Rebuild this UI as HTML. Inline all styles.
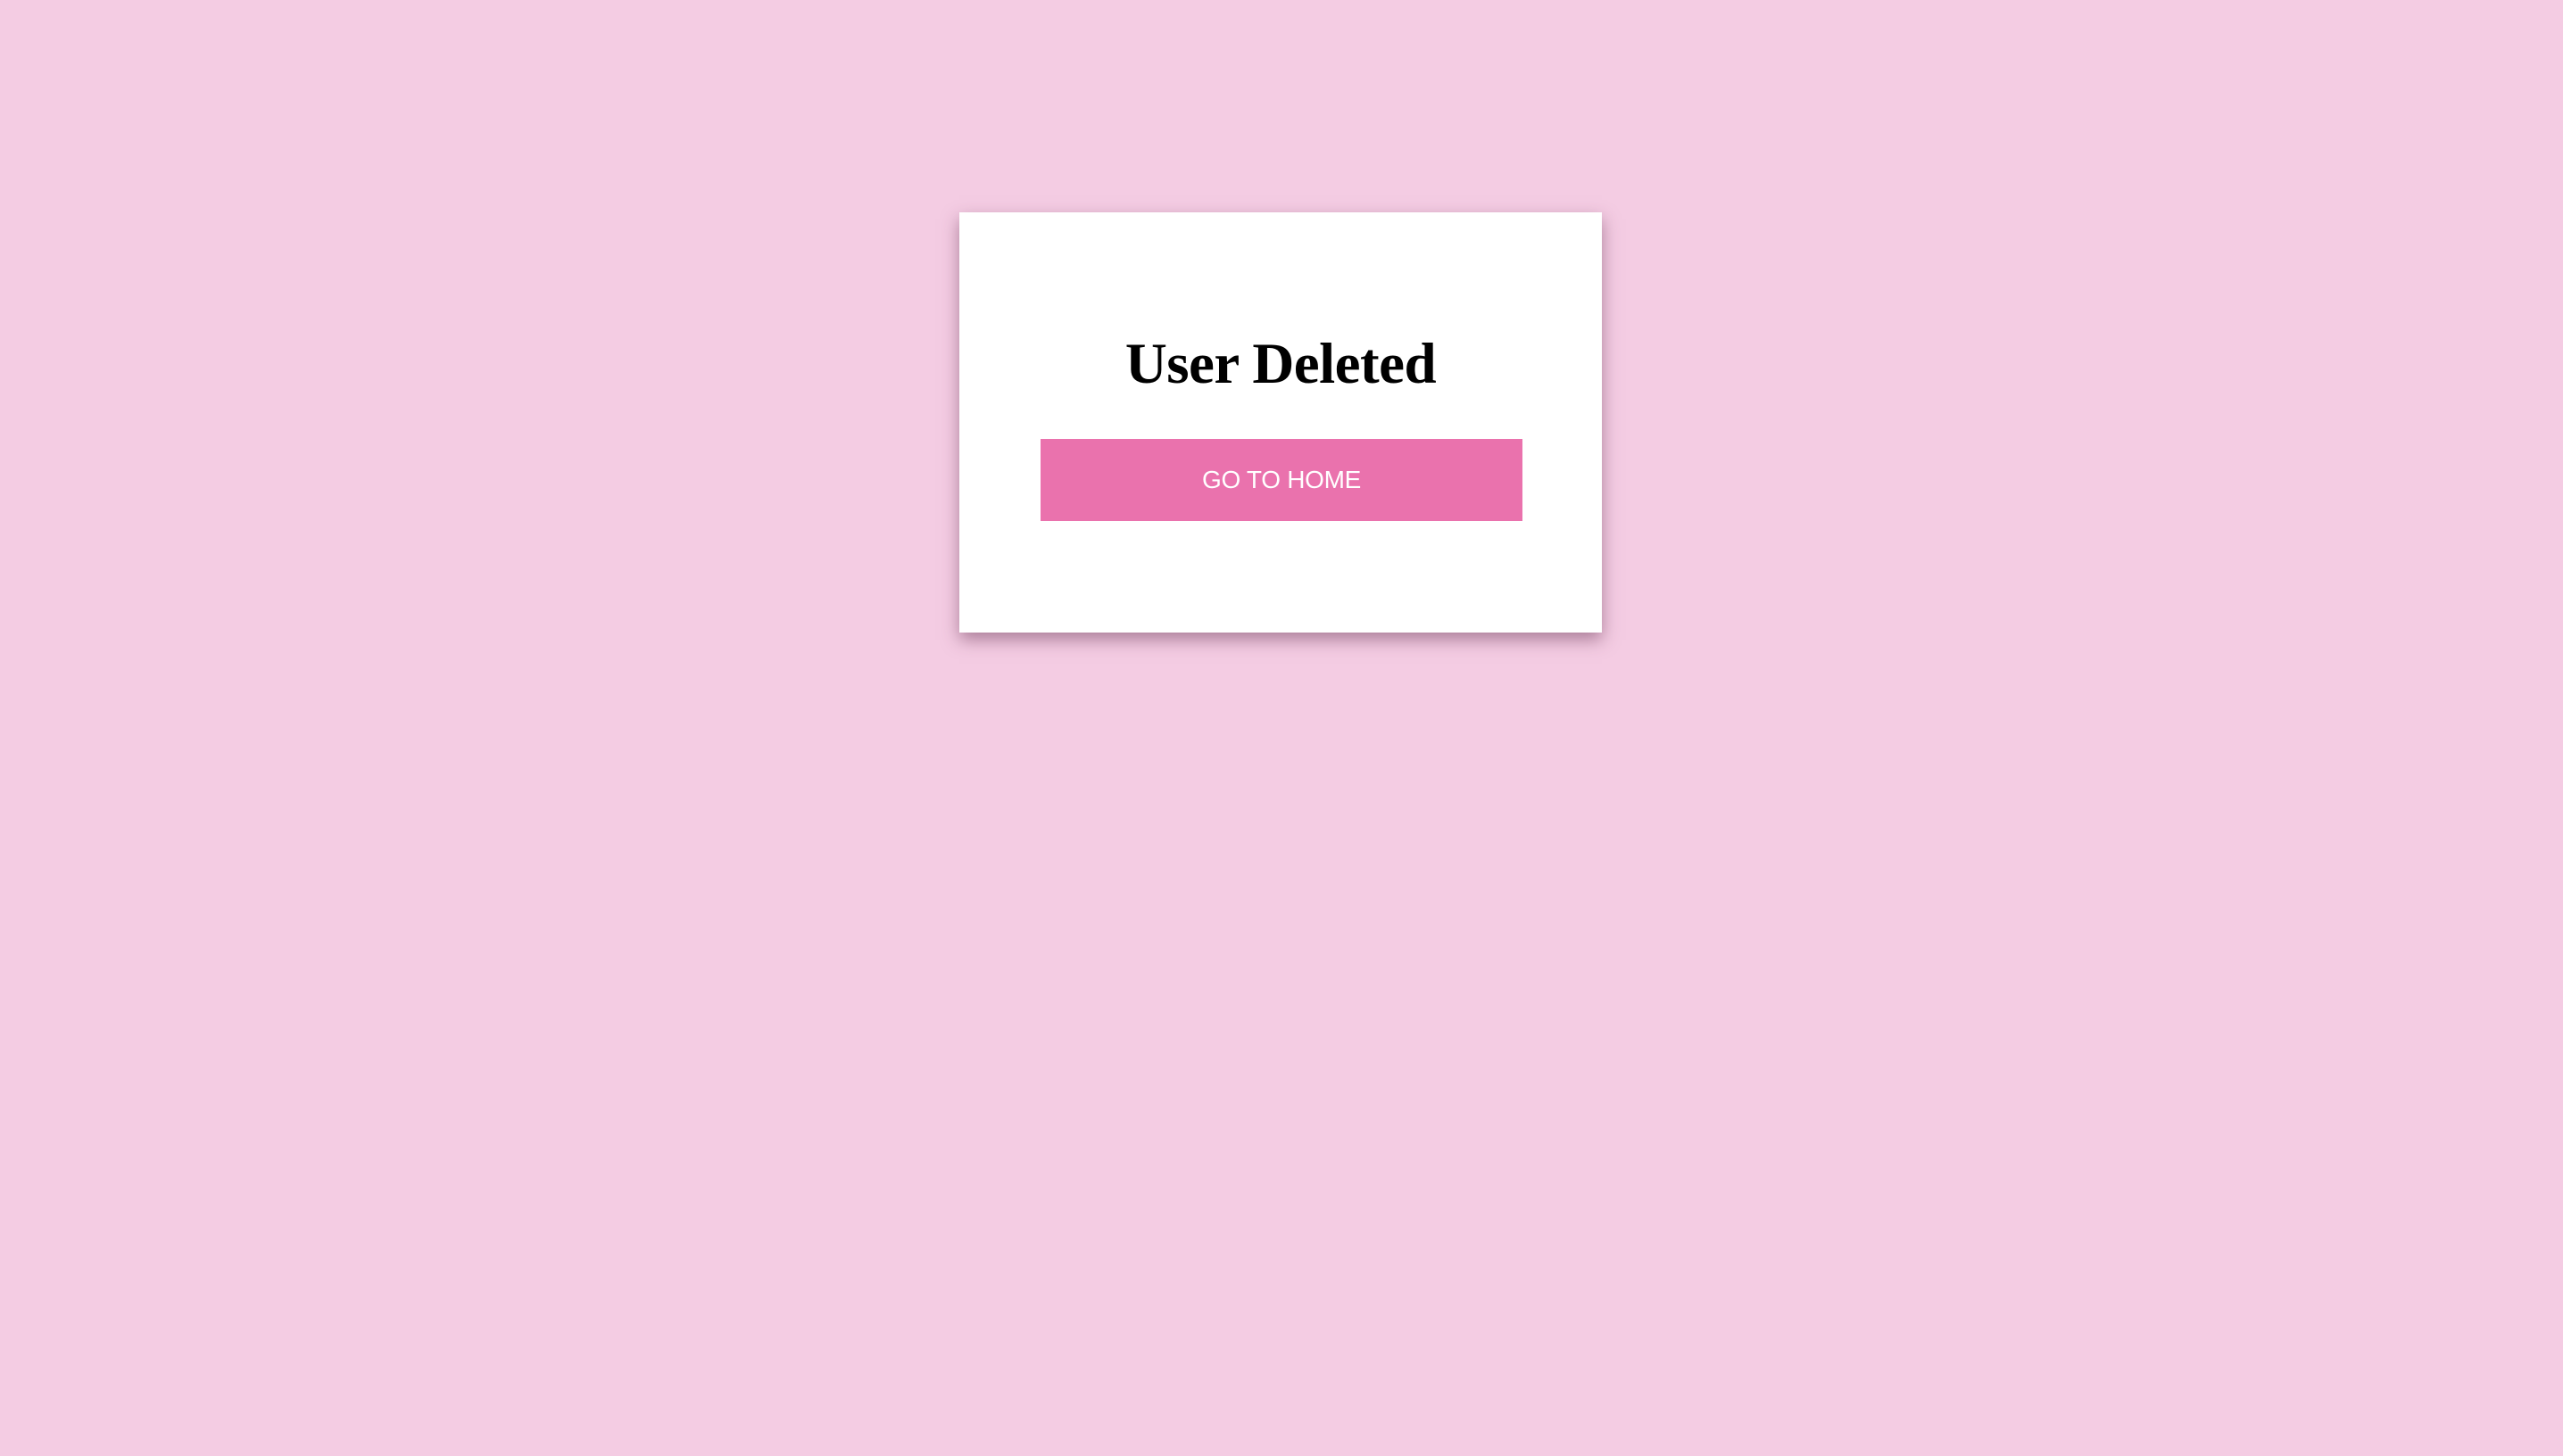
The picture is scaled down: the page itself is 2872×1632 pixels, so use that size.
<!DOCTYPE html>
<html><head><meta charset="utf-8"><style>
html,body{margin:0;padding:0;}
body{width:2872px;height:1632px;background:#f4cce3;position:relative;overflow:hidden;}
.card{position:absolute;left:1075px;top:238px;width:720px;height:471px;background:#fff;box-shadow:0 8px 18px rgba(100,50,80,0.5);}
h1{position:absolute;left:0;width:720px;top:0;margin:0;text-align:center;font-family:"Liberation Serif",serif;font-weight:bold;font-size:65px;line-height:67px;padding-top:137px;color:#000;letter-spacing:-0.5px;}
.btn{position:absolute;left:91px;top:254px;width:540px;height:92px;background:#ea72ad;color:#fff;font-family:"Liberation Sans",sans-serif;font-size:28px;line-height:92px;text-align:center;letter-spacing:-0.3px;}
</style></head><body>
<div class="card">
<h1>User Deleted</h1>
<div class="btn">GO TO HOME</div>
</div>
</body></html>
